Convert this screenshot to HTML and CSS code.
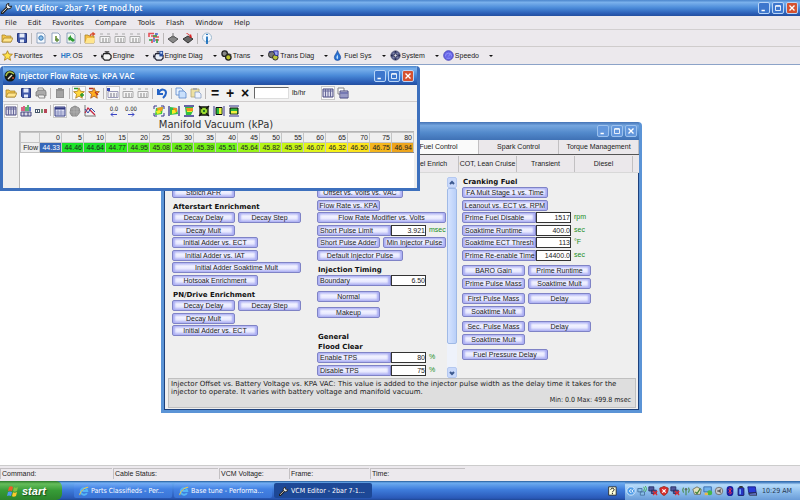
FILE: index.html
```html
<!DOCTYPE html>
<html lang="en">
<head>
<meta charset="utf-8">
<title>VCM Editor - 2bar 7-1 PE mod.hpt</title>
<link rel="stylesheet" href="styles.css">
</head>
<body>
<svg class="defs" aria-hidden="true">
  <symbol id="wrench" viewBox="0 0 12 12"><path d="M1 11 6.500 5.500" stroke="#222" stroke-width="3" stroke-linecap="round"/><path d="M1.300 10.500 7 5" stroke="#ddd" stroke-width="1"/><path d="M10.500 4A2.700 2.700 0 1 1 8 1.500L7.500 3.500 9 4.500Z" fill="#eee" stroke="#222"/></symbol>
  <symbol id="folder" viewBox="0 0 12 12"><path d="M1 10V3h3l1 1h5v6Z" fill="#f5c64a" stroke="#a8852c" stroke-width=".8"/><path d="M1 10 3 6h9l-2 4Z" fill="#ffe58d" stroke="#a8852c" stroke-width=".8"/></symbol>
  <symbol id="save" viewBox="0 0 12 12"><path d="M1.500 1.500h9v9h-8l-1-1Z" fill="#4058a8" stroke="#27397e"/><path d="M3.500 1.500h5v4h-5ZM4 7.500h4v3H4Z" fill="#e5ebfa"/></symbol>
  <symbol id="page" viewBox="0 0 12 12"><path d="M2 1h6l2 2v8H2Z" fill="#f5faff" stroke="#7891b0" stroke-width=".8"/><circle cx="6" cy="6" r="2.200" fill="#8fc0e8" stroke="#3977b2"/></symbol>
  <symbol id="pageadd" viewBox="0 0 12 12"><path d="M2 1h6l2 2v8H2Z" fill="#fff" stroke="#7891b0" stroke-width=".8"/><path d="M5 4h2v4H5Z" fill="#89a45b"/><path d="M5 8h4M7 6v4" stroke="#5f8a3c" stroke-width="1.300"/></symbol>
  <symbol id="pagego" viewBox="0 0 12 12"><path d="M2 1h6l2 2v8H2Z" fill="#f0f8f0" stroke="#7891b0" stroke-width=".8"/><path d="M3 6 6 3v2l4 3-2 2-3-2-1 1Z" fill="#2f9b34"/></symbol>
  <symbol id="foldernew" viewBox="0 0 12 12"><path d="M1 11V3h3l1 1h5v7Z" fill="#f5bd41" stroke="#a8852c" stroke-width=".8"/><path d="M1 11 3 6h8l-1 5Z" fill="#ffe58d"/><path d="M6 4q1-3 4-2M8.500.5l2 1.500-2 1.500" fill="none" stroke="#d94a2c" stroke-width="1.300"/></symbol>
  <symbol id="grid" viewBox="0 0 12 12"><path d="M1 4.500h10v6H1Z" fill="#f5f5f5" stroke="#aaa"/><path d="M3 7h2M6 7h2M9 7h1M3 9h2M6 9h2M9 9h1" stroke="#888"/><path d="M1 2h3M8 2h3" stroke="#aaa"/></symbol>
  <symbol id="griddot" viewBox="0 0 12 12"><path d="M1 4.500h10v6H1Z" fill="#f5f5f5" stroke="#9a9ab8"/><path d="M3 7h2M6 7h2M9 7h1M3 9h2M6 9h2M9 9h1" stroke="#778"/><path d="M0 1h3v3H0Z" fill="#3548b2"/></symbol>
  <symbol id="flow" viewBox="0 0 12 12"><path d="M1 5V1.500h5M8 1v4h3M4 7v4M7 8h4M3 4h3v3" fill="none" stroke="#e44f57" stroke-width="1.600"/><path d="M5 4h4M1 8h3M9 7v4" stroke="#35a547" stroke-width="1.600"/><path d="M7 2h3M6 6v4" stroke="#487ce0" stroke-width="1.600"/></symbol>
  <symbol id="chip" viewBox="0 0 12 12"><path d="M1 7 6 4l5 3-5 4Z" fill="#888" stroke="#555"/><path d="M6 1v5M4 4l2 2 2-2" fill="none" stroke="#777"/></symbol>
  <symbol id="chipred" viewBox="0 0 12 12"><path d="M1 7 6 4l5 3-5 4Z" fill="#666" stroke="#333"/><path d="m4 1 4 3-1 1 3 1-1-4-1 1-3-2Z" fill="#dc2424"/></symbol>
  <symbol id="info" viewBox="0 0 12 12"><circle cx="6" cy="5.500" r="4.500" fill="#f2f8ff" stroke="#9fb8cc"/><path d="M6 2v1M6 4.500V9M5 9h2M6 9v3" stroke="#2273bd" stroke-width="1.800"/></symbol>
  <symbol id="star" viewBox="0 0 12 12"><path d="m6 .8 1.500 3.500 3.900.4-3 2.600.9 3.900L6 9.100l-3.300 2.100.9-3.900-3-2.600 3.900-.4Z" fill="#ffe34c" stroke="#a97b1a" stroke-width=".9"/></symbol>
  <symbol id="staradd" viewBox="0 0 12 12"><path d="m6 .8 1.500 3.500 3.900.4-3 2.600.9 3.900L6 9.100l-3.300 2.100.9-3.900-3-2.600 3.900-.4Z" fill="#ffd83d" stroke="#b07b1a" stroke-width=".8"/><path d="M1 1.500h4M9 6v4M7 8h4" fill="none" stroke="#2d9b2d" stroke-width="1.400"/></symbol>
  <symbol id="stardel" viewBox="0 0 12 12"><path d="m6 .8 1.500 3.500 3.900.4-3 2.600.9 3.900L6 9.100l-3.300 2.100.9-3.900-3-2.600 3.900-.4Z" fill="#ffad20" stroke="#a9571a" stroke-width=".8"/><path d="M1 1.500h4M7 5l3 3" fill="none" stroke="#b92f1f" stroke-width="1.400"/></symbol>
  <symbol id="engine" viewBox="0 0 12 12"><path d="M3 4h6l2 2v3l-2 2H4L2 9V6ZM0 5v4M0 7h2M4 2h5M6.500 2v2" fill="#f4f4f4" stroke="#222" stroke-width="1.300"/></symbol>
  <symbol id="enginediag" viewBox="0 0 12 12"><path d="M3 4h6l2 2v3l-2 2H4L2 9V6ZM0 5v4M0 7h2M4 2h3" fill="#e9eef8" stroke="#223" stroke-width="1.300"/><path d="M7 1h4v6H7Z" fill="#274c9c"/><path d="M8 2h2v2H8Z" fill="#c7dcff"/></symbol>
  <symbol id="trans" viewBox="0 0 12 12"><circle cx="4" cy="4" r="3" fill="#888" stroke="#222" stroke-width="1.400"/><circle cx="8" cy="8" r="3" fill="#c0c62b" stroke="#222" stroke-width="1.400"/><path d="m5 2 3 2 3 1-1 2" fill="none" stroke="#333"/></symbol>
  <symbol id="transdiag" viewBox="0 0 12 12"><circle cx="4" cy="5" r="3.500" fill="#777" stroke="#222"/><circle cx="8" cy="8" r="3" fill="#bac33b" stroke="#222"/><path d="M1 2h3M6 1h5v5H8Z" fill="#98a5ef" stroke="#272c9a"/></symbol>
  <symbol id="drop" viewBox="0 0 12 12"><path d="M6 .5C7 4 9.500 5.500 9.500 8A3.500 3.500 0 0 1 2.500 8C2.500 5.500 5 4 6 .5Z" fill="#286fd1" stroke="#164292" stroke-width=".6"/><path d="M6 5c1 3 1 4 0 5-2-1-1-3 0-5Z" fill="#bde1ff"/></symbol>
  <symbol id="system" viewBox="0 0 12 12"><circle cx="6" cy="6" r="5" fill="#adb1cb" stroke="#44476b"/><path d="M6 1v10M1 6h10" stroke="#20244d" stroke-width="2"/><path d="M3 3h6v6H3Z" fill="none" stroke="#3d4577"/><path d="M6 4v4M4 6h4" stroke="#fff" stroke-width=".7"/></symbol>
  <symbol id="speedo" viewBox="0 0 12 12"><circle cx="6" cy="6" r="5.200" fill="#6968e8" stroke="#433eb8"/><path d="M2.500 7a3.500 3.500 0 0 1 7 0M6 7 8 4M4 9h4" fill="none" stroke="#9b99ff" stroke-width=".8"/></symbol>
  <symbol id="printer" viewBox="0 0 12 12"><path d="M3 4V1h5l1 3" fill="#fff" stroke="#888"/><path d="m1 5 3-2h6l1 2v4H1Z" fill="#aaa" stroke="#777" stroke-width=".8"/><path d="M3 8h6l1 3H4Z" fill="#eee" stroke="#777" stroke-width=".8"/></symbol>
  <symbol id="greydoc" viewBox="0 0 12 12"><path d="M2 2h2V1h4v1h2v9H2Z" fill="#909090"/><path d="M3 5h6M3 7h6M3 9h6" stroke="#b5b5b5"/></symbol>
  <symbol id="undo" viewBox="0 0 12 12"><path d="M2 2v5h5M2.500 6C5 1 10 2 10 6c0 2-1 3-3 5" fill="none" stroke="#2564c7" stroke-width="2"/></symbol>
  <symbol id="copy" viewBox="0 0 12 12"><path d="M1 1h5l2 2v5H1Z" fill="#e7f2ff" stroke="#5887ca" stroke-width=".8"/><path d="M4 4h5l2 2v5H4Z" fill="#c9e0fc" stroke="#5887ca" stroke-width=".8"/></symbol>
  <symbol id="paste" viewBox="0 0 12 12"><path d="M1 2h8v8H1Z" fill="#eee1a2" stroke="#b1a67b" stroke-width=".8"/><path d="M3 1h4v2H3Z" fill="#aaa"/><path d="M5 5h4l2 2v4H5Z" fill="#eef3ff" stroke="#899ec1" stroke-width=".8"/></symbol>
  <symbol id="columns" viewBox="0 0 12 12"><path d="M1 2h10v8H1Z" fill="#dcdcec" stroke="#44457c"/><path d="M3.500 2v8M6 2v8M8.500 2v8M1 4h10" stroke="#66689a"/></symbol>
  <symbol id="columns2" viewBox="0 0 12 12"><path d="M1 1h6v6H1Z" fill="#fff" stroke="#888"/><path d="M3 4h8v7H3Z" fill="#dcdcec" stroke="#44457c"/><path d="M5 5v6M7 5v6M9 5v6M3 6h8" stroke="#5558a0"/></symbol>
  <symbol id="bars" viewBox="0 0 12 12"><path d="M2 2v4M4 1v5" stroke="#d43d67" stroke-width="1.600"/><path d="M6 2v4M8 0v6" stroke="#36a852" stroke-width="1.600"/><path d="M10 2v4" stroke="#4156c7" stroke-width="1.600"/><path d="M1 7h10v4H1Z" fill="#d8d8e8" stroke="#44457c"/><path d="M4 7v4M8 7v4" stroke="#44457c"/></symbol>
  <symbol id="pair" viewBox="0 0 12 12"><path d="M0 4h5v4H0Z" fill="#47586c"/><path d="M1 5h1v2H1M3 5h1v2H3" fill="#fff"/><path d="M6 4h2v4H6Z" fill="#6f9b70"/><path d="M9 4h3v4H9Z" fill="#b64657"/></symbol>
  <symbol id="tableview" viewBox="0 0 12 12"><path d="M1 2h10v9H1Z" fill="#dfe1f5" stroke="#303981"/><path d="M1 3.500h10" stroke="#303981" stroke-width="2"/><path d="M4 4v7M7 4v7M1 7h10M1 9h10" stroke="#7a81b5" stroke-width=".7"/></symbol>
  <symbol id="sphere" viewBox="0 0 12 12"><path d="m2 3 4-2 4 2 1 4-3 4H3L1 8Z" fill="#999" stroke="#888"/><path d="M2 4h8M1 7h10M5 2v9M8 2v9" stroke="#b8b8b8" stroke-width=".6"/></symbol>
  <symbol id="chart" viewBox="0 0 12 12"><path d="M1 0v11h11" fill="none" stroke="#777"/><path d="m1 8 3-5 3 3 4 4" fill="none" stroke="#c4253f" stroke-width="1.200"/><path d="m1 4 3 4 3-5 4 4" fill="none" stroke="#334da8"/></symbol>
  <symbol id="heat" viewBox="0 0 12 12"><path d="M1 4V1h3M8 1h3v3M11 8v3H8M4 11H1V8" fill="none" stroke="#34358b"/><path d="M3 3 10 2 9 9 2 10Z" fill="#3dc83b"/><path d="m4 3 6-1-1 4-4 1Z" fill="#f49a1e"/><path d="m3 6 4-1 1 3-4 1Z" fill="#f4ee27"/></symbol>
  <symbol id="heatv" viewBox="0 0 12 12"><path d="M1 1v10M11 1v10" stroke="#34358b" stroke-width="1.300"/><path d="M2 2 9 3l1 6-8 1Z" fill="#33bf43"/><path d="m5 3 4 0v4L6 8Z" fill="#f48e1e"/><path d="m4 5 3 0 1 3-4 1Z" fill="#f4ee27"/></symbol>
  <symbol id="heath" viewBox="0 0 12 12"><path d="M1 1h10M1 11h10" stroke="#34358b" stroke-width="1.300"/><path d="M2 2h8v4l-2 4H3Z" fill="#33bf43"/><path d="M3 3h7v3H4Z" fill="#f48e1e"/><path d="M4 6h5v1H4Z" fill="#f4ee27"/></symbol>
  <symbol id="boxx" viewBox="0 0 12 12"><path d="M2 2h8v8H2Z" fill="#9bdc31" stroke="#111" stroke-width="1.300"/><path d="m1 1 3 3M11 1 8 4M1 11l3-3M11 11 8 8" stroke="#111" stroke-width="1.300"/><path d="M5 5h2v2H5Z" fill="#1f7821"/></symbol>
  <symbol id="boxv" viewBox="0 0 12 12"><path d="M1 1v10M11 1v10" stroke="#34358b"/><path d="M3 2.500h6v7H3Z" fill="#2bb63d" stroke="#111"/><path d="M6 3h2.500v6H6Z" fill="#f4ef3c"/></symbol>
  <symbol id="boxh" viewBox="0 0 12 12"><path d="M1 1h10M1 11h10" stroke="#34358b"/><path d="M2 3h8v6H2Z" fill="#2bb63d" stroke="#111"/><path d="M3 6h6v2.500H3Z" fill="#f4ef3c"/></symbol>
  <symbol id="left" viewBox="0 0 12 5"><path d="M3 2.500h6M5 .5 3 2.500l2 2" fill="none" stroke="#3b46c4"/></symbol>
  <symbol id="right" viewBox="0 0 12 5"><path d="M3 2.500h6M7 .5l2 2-2 2" fill="none" stroke="#3b46c4"/></symbol>
  <symbol id="gauge" viewBox="0 0 12 12"><circle cx="6" cy="6" r="5.500" fill="#171b14"/><path d="M2 6c1-5 5-5 8-2" stroke="#a9c14a" stroke-width="1.500" fill="none"/><path d="m4 9 4-4" stroke="#e8e4cf" stroke-width="1.500"/><path d="M8 8h2" stroke="#d54b35" stroke-width="1.500"/></symbol>
  <symbol id="min" viewBox="0 0 12 12"><path d="M3 9h4" stroke="#fff" stroke-width="1.800"/></symbol>
  <symbol id="max" viewBox="0 0 12 12"><path d="M3 3.500h6v5.500H3Z" fill="none" stroke="#fff"/><path d="M3 3.500h6" stroke="#fff" stroke-width="1.600"/></symbol>
  <symbol id="close" viewBox="0 0 12 12"><path d="m3 3 6 6M9 3 3 9" stroke="#fff" stroke-width="1.600"/></symbol>
  <symbol id="ie" viewBox="0 0 12 12"><path d="M9.500 8.500A4 4 0 1 1 10 6H4" fill="none" stroke="#55b6f5" stroke-width="2.200"/><path d="M1 11C0 8 7 1 11 1.500" fill="none" stroke="#f5cd45" stroke-width="1.200"/></symbol>
  <symbol id="windows" viewBox="0 0 12 12"><path d="M2 2q2-1.500 4 0L5 6Q3 5 1 6Z" fill="#f05b28"/><path d="M7 2.300q2 1 4-.3l-1 4q-2 1.200-4 .3Z" fill="#80c342"/><path d="M1 7q2-1.200 4 0l-1 4q-2-1.200-4 0Z" fill="#4e9af0"/><path d="M6 7.300q2 1 4-.3l-1 4q-2 1.200-4 .3Z" fill="#fbc92c"/></symbol>
  <symbol id="help" viewBox="0 0 12 12"><path d="M2 1h9v10H2Z" fill="#ffffdc" stroke="#222"/><path d="M4.500 4.500C4.500 2 8.500 2 8.500 4.500 8.500 6 6.500 6 6.500 7.500M6.500 8.500v1.300" fill="none" stroke="#111" stroke-width="1.200"/></symbol>
  <symbol id="collapse" viewBox="0 0 12 12"><circle cx="6" cy="6" r="5" fill="#4c9be8" stroke="#e5f2ff"/><path d="M6.500 3.500 4 6l2.500 2.500M9 4 7 6l2 2" fill="none" stroke="#fff" stroke-width="1.200"/></symbol>
  <symbol id="net" viewBox="0 0 12 12"><path d="M1 3h5v4H1ZM4 7h5v4H4Z" fill="#87bfe9" stroke="#456d9b"/><path d="M8 1q2 2 0 5M10 0q3 3 0 7" fill="none" stroke="#3aad43"/></symbol>
  <symbol id="netoff" viewBox="0 0 12 12"><path d="M1 1h6v5H1ZM4 5h6v4H4Z" fill="#50589c" stroke="#252e61"/><path d="m6 6 5 5M11 6l-5 5" stroke="#e32a2a" stroke-width="1.500"/></symbol>
  <symbol id="shield" viewBox="0 0 12 12"><path d="m6 .5 5 2c0 5-1 7-5 9-4-2-5-4-5-9Z" fill="#d92d2d" stroke="#932"/><path d="m4 4 4 4M8 4 4 8" stroke="#fff" stroke-width="1.500"/></symbol>
  <symbol id="antenna" viewBox="0 0 12 12"><path d="M6 4v7M3 2q-2 3 0 6M9 2q2 3 0 6" fill="none" stroke="#4a8a4c" stroke-width="1.300"/><circle cx="6" cy="4" r="1.500" fill="#5c7160"/></symbol>
  <symbol id="check" viewBox="0 0 12 12"><path d="m1 4 5-3 5 3-1 6H3Z" fill="#e3e0bc" stroke="#66695a"/><path d="m4 7 2 2 4-6" fill="none" stroke="#3a7f2e" stroke-width="1.500"/></symbol>
  <symbol id="monitor" viewBox="0 0 12 12"><path d="M1 1h9v6H1Z" fill="#71b1ea" stroke="#36a"/><circle cx="8" cy="8" r="3" fill="#45b64a"/><path d="M2 8h4v3H2Z" fill="#e9b84e"/></symbol>
  <symbol id="speaker" viewBox="0 0 12 12"><circle cx="6" cy="6" r="4.500" fill="#c8c8c8" stroke="#666"/><path d="M4 5h2l2-2v6L6 7H4Z" fill="#555"/></symbol>
  <symbol id="bt" viewBox="0 0 12 12"><rect x="2" y="0" width="8" height="12" rx="4" fill="#171d9f"/><path d="m4 4 4 4-2 2V2l2 2-4 4" fill="none" stroke="#ec3158"/></symbol>
  <symbol id="battery" viewBox="0 0 12 12"><rect x="2.500" y="2" width="7" height="9.500" rx="1" fill="#2735c4" stroke="#111659"/><path d="M4 1h4" stroke="#333" stroke-width="2"/><path d="M4 4h2v6H4Z" fill="#70aaf5"/></symbol>
  <symbol id="laptop" viewBox="0 0 12 12"><path d="M1 1h9l1 7H2Z" fill="#2a3bd6" stroke="#171e7c"/><path d="m2 9 9-1 1 3H3Z" fill="#7088e8" stroke="#223"/></symbol>
</svg>

<header class="app-title">
  <svg class="ico"><use href="#wrench"/></svg><h1>VCM Editor - 2bar 7-1 PE mod.hpt</h1>
  <div class="caption"><button aria-label="Minimize"><svg><use href="#min"/></svg></button><button aria-label="Restore"><svg><use href="#max"/></svg></button><button class="x" aria-label="Close"><svg><use href="#close"/></svg></button></div>
</header>
<nav class="menu"><button>File</button><button>Edit</button><button>Favorites</button><button>Compare</button><button>Tools</button><button>Flash</button><button>Window</button><button>Help</button></nav>
<div class="toolbar">
  <button aria-label="Open"><svg><use href="#folder"/></svg></button><button aria-label="Save"><svg><use href="#save"/></svg></button><i></i>
  <button aria-label="View"><svg><use href="#page"/></svg></button><button aria-label="Add"><svg><use href="#pageadd"/></svg></button><button aria-label="Export"><svg><use href="#pagego"/></svg></button><i></i>
  <button aria-label="Open compare"><svg><use href="#foldernew"/></svg></button><button aria-label="Grid A"><svg><use href="#grid"/></svg></button><button aria-label="Grid B"><svg><use href="#grid"/></svg></button><button aria-label="Grid C"><svg><use href="#grid"/></svg></button><i></i>
  <button aria-label="Differences"><svg><use href="#flow"/></svg></button><i></i>
  <button aria-label="Read"><svg><use href="#chip"/></svg></button><button aria-label="Write"><svg><use href="#chipred"/></svg></button><i></i>
  <button aria-label="Information"><svg><use href="#info"/></svg></button>
</div>
<div class="groups">
  <button><svg><use href="#star"/></svg>Favorites<b></b></button>
  <button><em>HP.</em>OS<b></b></button>
  <button><svg><use href="#engine"/></svg>Engine<b></b></button>
  <button><svg><use href="#enginediag"/></svg>Engine Diag<b></b></button>
  <button><svg><use href="#trans"/></svg>Trans<b></b></button>
  <button><svg><use href="#transdiag"/></svg>Trans Diag<b></b></button>
  <button><svg><use href="#drop"/></svg>Fuel Sys<b></b></button>
  <button><svg><use href="#system"/></svg>System<b></b></button>
  <button><svg><use href="#speedo"/></svg>Speedo<b></b></button>
</div>

<main class="desk">
  <section class="win editor">
    <div class="win-title"><div class="caption"><button aria-label="Minimize"><svg><use href="#min"/></svg></button><button aria-label="Maximize"><svg><use href="#max"/></svg></button><button aria-label="Close"><svg><use href="#close"/></svg></button></div></div>
    <div class="tabs main-tabs"><button class="on">Fuel Control</button><button>Spark Control</button><button>Torque Management</button></div>
    <div class="tabs sub-tabs"><button>Fuel Enrich</button><button>COT, Lean Cruise</button><button>Transient</button><button>Diesel</button><span></span></div>
    <div class="panel">
      <div class="col first">
        <div class="rows"><button class="half">Stoich AFR</button></div>
        <h2>Afterstart Enrichment</h2>
        <div class="rows">
          <div class="row"><button class="half">Decay Delay</button><button class="half">Decay Step</button></div>
          <button class="half">Decay Mult</button>
          <button class="mid">Initial Adder vs. ECT</button>
          <button class="mid">Initial Adder vs. IAT</button>
          <button>Initial Adder Soaktime Mult</button>
          <button class="mid">Hotsoak Enrichment</button>
        </div>
        <h2>PN/Drive Enrichment</h2>
        <div class="rows">
          <div class="row"><button class="half">Decay Delay</button><button class="half">Decay Step</button></div>
          <button class="half">Decay Mult</button>
          <button class="mid">Initial Adder vs. ECT</button>
        </div>
      </div>
      <div class="col second">
        <div class="rows">
          <button class="mid">Offset vs. Volts vs. VAC</button>
          <button class="half">Flow Rate vs. KPA</button>
          <button>Flow Rate Modifier vs. Volts</button>
          <div class="field"><label for="spl">Short Pulse Limit</label><input id="spl" value="3.921"><span>msec</span></div>
          <div class="row"><button class="half">Short Pulse Adder</button><button class="half">Min Injector Pulse</button></div>
          <button class="mid">Default Injector Pulse</button>
        </div>
        <h2>Injection Timing</h2>
        <div class="rows spaced">
          <div class="field"><label for="bnd">Boundary</label><input id="bnd" value="6.50"></div>
          <button class="half">Normal</button>
          <button class="half">Makeup</button>
        </div>
        <h2 class="general">General<br>Flood Clear</h2>
        <div class="rows">
          <div class="field"><label for="etps">Enable TPS</label><input id="etps" value="80"><span>%</span></div>
          <div class="field"><label for="dtps">Disable TPS</label><input id="dtps" value="75"><span>%</span></div>
        </div>
      </div>
      <div class="scroll"><button aria-label="Scroll up"><svg viewBox="0 0 8 8"><path d="m2 5 2-2 2 2"/></svg></button><div class="thumb"></div><button aria-label="Scroll down"><svg viewBox="0 0 8 8"><path d="m2 3 2 2 2-2"/></svg></button></div>
      <div class="col third">
        <h2>Cranking Fuel</h2>
        <div class="rows">
          <button class="mid">FA Mult Stage 1 vs. Time</button>
          <button class="mid">Leanout vs. ECT vs. RPM</button>
          <div class="field"><label for="pfd">Prime Fuel Disable</label><input id="pfd" value="1517"><span>rpm</span></div>
          <div class="field"><label for="skr">Soaktime Runtime</label><input id="skr" value="400.0"><span>sec</span></div>
          <div class="field"><label for="ske">Soaktime ECT Thresh</label><input id="ske" value="113"><span>°F</span></div>
          <div class="field"><label for="prt">Prime Re-enable Time</label><input id="prt" value="14400.0"><span>sec</span></div>
        </div>
        <div class="rows block">
          <div class="row"><button class="half">BARO Gain</button><button class="half">Prime Runtime</button></div>
          <div class="row"><button class="half">Prime Pulse Mass</button><button class="half">Soaktime Mult</button></div>
        </div>
        <div class="rows block">
          <div class="row"><button class="half">First Pulse Mass</button><button class="half">Delay</button></div>
          <button class="half">Soaktime Mult</button>
        </div>
        <div class="rows block">
          <div class="row"><button class="half">Sec. Pulse Mass</button><button class="half">Delay</button></div>
          <button class="half">Soaktime Mult</button>
        </div>
        <div class="rows block"><button class="mid">Fuel Pressure Delay</button></div>
      </div>
    </div>
    <div class="note"><p>Injector Offset vs. Battery Voltage vs. KPA VAC: This value is added to the injector pulse width as the delay time it takes for the injector to operate. It varies with battery voltage and manifold vacuum.</p><p class="range">Min: 0.0 Max: 499.8 msec</p></div>
  </section>

  <section class="win flow">
    <div class="win-title"><svg class="ico"><use href="#gauge"/></svg><h1>Injector Flow Rate vs. KPA VAC</h1><div class="caption"><button aria-label="Minimize"><svg><use href="#min"/></svg></button><button aria-label="Maximize"><svg><use href="#max"/></svg></button><button class="x" aria-label="Close"><svg><use href="#close"/></svg></button></div></div>
    <div class="toolbar">
      <button aria-label="Open"><svg><use href="#folder"/></svg></button><button aria-label="Save"><svg><use href="#save"/></svg></button><button aria-label="Print"><svg><use href="#printer"/></svg></button><i></i>
      <button aria-label="Notes"><svg><use href="#greydoc"/></svg></button><i></i>
      <button class="on" aria-label="Add favorite"><svg><use href="#staradd"/></svg></button><button aria-label="Remove favorite"><svg><use href="#stardel"/></svg></button><i></i>
      <button class="on" aria-label="Current"><svg><use href="#griddot"/></svg></button><button aria-label="Compare"><svg><use href="#grid"/></svg></button><button aria-label="Difference"><svg><use href="#grid"/></svg></button><i></i>
      <button aria-label="Undo"><svg><use href="#undo"/></svg></button><i></i>
      <button aria-label="Copy"><svg><use href="#copy"/></svg></button><button aria-label="Paste"><svg><use href="#paste"/></svg></button><i></i>
      <button class="op">=</button><button class="op">+</button><button class="op">×</button>
      <input class="amount" id="amount"><label for="amount">lb/hr</label>
      <button class="on" aria-label="Show columns"><svg><use href="#columns"/></svg></button><button aria-label="Copy columns"><svg><use href="#columns2"/></svg></button>
    </div>
    <div class="toolbar second-bar">
      <button class="on" aria-label="Columns"><svg><use href="#columns"/></svg></button><button aria-label="Bars"><svg><use href="#bars"/></svg></button><button aria-label="Pairs"><svg><use href="#pair"/></svg></button><i></i>
      <button class="on" aria-label="Table"><svg><use href="#tableview"/></svg></button><button aria-label="Surface"><svg><use href="#sphere"/></svg></button><button aria-label="Chart"><svg><use href="#chart"/></svg></button>
      <div class="decimals"><button>0.0<svg><use href="#left"/></svg></button><button>0.00<svg><use href="#right"/></svg></button></div>
      <button aria-label="Smooth"><svg><use href="#heat"/></svg></button><button aria-label="Smooth rows"><svg><use href="#heatv"/></svg></button><button aria-label="Smooth columns"><svg><use href="#heath"/></svg></button><button aria-label="Interpolate"><svg><use href="#boxx"/></svg></button><button aria-label="Interpolate rows"><svg><use href="#boxv"/></svg></button><button aria-label="Interpolate columns"><svg><use href="#boxh"/></svg></button>
    </div>
    <h2 class="axis">Manifold Vacuum (kPa)</h2>
    <div class="sheet">
      <table>
        <thead><tr><th class="corner"></th><th>0</th><th>5</th><th>10</th><th>15</th><th>20</th><th>25</th><th>30</th><th>35</th><th>40</th><th>45</th><th>50</th><th>55</th><th>60</th><th>65</th><th>70</th><th>75</th><th>80</th></tr></thead>
        <tbody><tr><th>Flow</th><td class="sel">44.33</td><td class="h1">44.46</td><td class="h1">44.64</td><td class="h2">44.77</td><td class="h3">44.95</td><td class="h4">45.08</td><td class="h4">45.20</td><td class="h5">45.39</td><td class="h6">45.51</td><td class="h7">45.64</td><td class="h8">45.82</td><td class="h9">45.95</td><td class="h10">46.07</td><td class="h11">46.32</td><td class="h12">46.50</td><td class="h13">46.75</td><td class="h14">46.94</td></tr></tbody>
      </table>
    </div>
  </section>
</main>

<footer class="status"><span class="s1">Command:</span><span class="s2">Cable Status:</span><span class="s3">VCM Voltage:</span><span class="s4">Frame:</span><span class="s5">Time:</span></footer>
<div class="taskbar">
  <button class="start"><svg><use href="#windows"/></svg>start</button>
  <div class="tasks">
    <button><svg><use href="#ie"/></svg>Parts Classifieds - Per...</button>
    <button><svg><use href="#ie"/></svg>Base tune - Performa...</button>
    <button class="on"><svg><use href="#wrench"/></svg>VCM Editor - 2bar 7-1...</button>
  </div>
  <svg class="help"><use href="#help"/></svg>
  <div class="tray"><svg><use href="#collapse"/></svg><svg><use href="#net"/></svg><svg><use href="#netoff"/></svg><svg><use href="#shield"/></svg><svg><use href="#netoff"/></svg><svg><use href="#antenna"/></svg><svg><use href="#check"/></svg><svg><use href="#monitor"/></svg><svg><use href="#speaker"/></svg><svg><use href="#bt"/></svg><svg><use href="#battery"/></svg><svg><use href="#laptop"/></svg><time>10:29 AM</time></div>
</div>
</body>
</html>
```
FILE: styles.css
```css
* { box-sizing: border-box; }
body {
  margin: 0;
  min-height: 100vh;
  display: flex;
  flex-direction: column;
  overflow: hidden;
  background: #ece9ed;
  color: #222;
  font: 7px/10px "Liberation Sans", sans-serif;
}
button, input { font: inherit; color: inherit; border: 0; padding: 0; margin: 0; background: none; }
button { white-space: nowrap; }
svg { display: block; flex: none; width: 12px; height: 12px; }
h1, h2, p { margin: 0; }
.defs { position: absolute; width: 0; height: 0; }

/* Title bars */
.app-title, .win-title {
  display: flex;
  align-items: center;
  gap: 2px;
  background: linear-gradient(#4b85cc, #7ab1ec 15%, #4a8ad8 50%, #2a5db5 85%, #244f9f);
  color: #fff;
}
.app-title { height: 16px; padding: 0 2px 0 1px; }
.app-title h1, .win-title h1 { font: 600 8px/12px "Open Sans", sans-serif; }
.caption { display: flex; gap: 2px; margin-left: auto; }
.caption button { width: 12px; height: 12px; border: 1px solid #b9d5f7; border-radius: 2px; background: #3d77cd; }
.caption svg { width: 10px; height: 10px; }
.caption .x { background: #d5512f; }

/* Menu and toolbars */
.menu { height: 14px; display: flex; gap: 11px; padding-left: 5px; border-bottom: 1px solid #d2cfd0; font: 7px/12px "DejaVu Sans", sans-serif; }
.toolbar { display: flex; align-items: center; gap: 3px; height: 17px; padding-left: 1px; border-bottom: 1px solid #cfcccc; }
.toolbar i { width: 1px; height: 11px; background: #bbb8b8; }
.groups { display: flex; align-items: center; gap: 4px; height: 17px; padding-left: 2px; }
.groups button { display: flex; align-items: center; gap: 1px; }
.groups svg { width: 11px; height: 11px; }
.groups b { margin-left: 9px; border: 2px solid transparent; border-top-color: #111; border-bottom: 0; }
.groups em { font: bold 7px/10px "Liberation Sans", sans-serif; color: #2777c5; }

/* MDI workspace */
.desk { position: relative; flex: 1; background: #fff; border-top: 1px solid #8ca3c8; }
.win { position: absolute; display: flex; flex-direction: column; background: #efefef; border-radius: 4px 4px 0 0; overflow: hidden; }
.win-title { height: 18px; flex: none; }
.flow { left: 0; top: 1px; width: 420px; height: 125px; border: solid #3d70bd; border-width: 0 3px 3px; }
.flow .win-title { margin: 0 -3px; padding: 0 6px 0 4px; height: 19px; }
.flow .toolbar { padding-left: 2px; background: #f2f2f2; }
.toolbar .on { background: #fafafa; outline: 1px solid #c8c8c8; }
.toolbar .op { width: 12px; font: bold 14px/12px "Liberation Sans", sans-serif; color: #111; }
.toolbar .amount { width: 35px; height: 12px; background: #fff; border: 1px solid #ccc; border-color: #666 #ddd #ddd #666; }
.toolbar label { margin-right: 13px; }
.decimals { display: flex; margin: 0 12px 0 8px; gap: 3px; }
.decimals button { width: 14px; font: 6px/7px "DejaVu Sans Condensed", sans-serif; }
.decimals svg { width: 12px; height: 5px; margin: auto; }
.flow .second-bar { border-bottom: 0; }
.axis { font: 10px/12px "DejaVu Sans", sans-serif; text-align: center; padding-left: 12px; color: #333; }
.sheet { flex: 1; margin: 0 3px 0 16px; background: #fff; border: solid #b5b5b5; border-width: 1px 0 0 1px; }
table { width: 100%; border-collapse: collapse; table-layout: fixed; }
th, td { height: 10px; padding: 0 1px 0 0; text-align: right; font-weight: normal; border: 1px solid #c5c5c5; line-height: 9px; }
th { background: #efefef; }
.corner { width: 19px; }
td { border-color: transparent #c5c5c5 #888 transparent; }
.sel { background: #3566b8; color: #fff; }
.h1 { background: #1de32a; } .h2 { background: #30ee1d; } .h3 { background: #4fee1d; }
.h4 { background: #67ee18; } .h5 { background: #73f016; } .h6 { background: #72f71d; }
.h7 { background: #9af518; } .h8 { background: #b2f514; } .h9 { background: #c5f616; }
.h10 { background: #e0f51c; } .h11 { background: #f6f218; } .h12 { background: #fbe31e; }
.h13 { background: #f4b61d; } .h14 { background: #eda51d; }

.editor { left: 161px; top: 57px; width: 481px; height: 291px; border: solid #5b94d6; border-width: 0 3px 3px; box-shadow: inset 0 0 0 1px #1d417c; }
.editor .win-title { margin: 0 -3px; padding-right: 5px; background: linear-gradient(#4473b6, #75a6df 20%, #5289cb 60%, #3f71b5); }
.editor .caption button { background: #6397dc; border-color: #9cc1ee; }
.tabs { display: flex; justify-content: flex-end; background: #ebe8eb; }
.tabs button { overflow: hidden; border-right: 1px solid #c2c0c2; }
.main-tabs { height: 14px; }
.main-tabs button { width: 80px; }
.main-tabs .on { background: #fafafa; }
.sub-tabs { height: 18px; border: solid #555; border-width: 1px 0 0; padding-top: 1px; }
.sub-tabs button { width: 58px; }
.sub-tabs span { width: 6px; }
.panel { flex: 1; min-height: 0; display: flex; overflow: hidden; padding-top: 4px; border-top: 1px solid #d8d8d8; }
.col { width: 129px; flex: none; }
.first { margin: 10px 16px 0 8px; }
.second { margin-top: 10px; }
.scroll { width: 10px; margin: 0 5px 0 1px; display: flex; flex-direction: column; background: #eef2fb; }
.scroll button { height: 11px; flex: none; border: 1px solid #b4c8f0; border-radius: 2px; background: #c9d9fb; }
.scroll svg { width: 8px; height: 8px; }
.scroll path { fill: none; stroke: #3d5a8f; stroke-width: 2; }
.thumb { flex: 1; margin-bottom: 23px; border: 1px solid #9fb9e6; border-radius: 2px; background: linear-gradient(90deg, #d5e3ff, #b9cff8); }
.col h2 { font: bold 7px/10px "DejaVu Sans", sans-serif; color: #111; padding-left: 1px; margin-top: 4px; }
.third h2 { margin-top: 0; }
.col .general { margin-top: 14px; }
.rows > * { margin-bottom: 2px; }
.rows > :nth-child(even) { margin-bottom: 1px; }
.rows.spaced > * { margin-bottom: 5px; }
.rows.block { padding-top: 3px; }
.rows > button { display: block; width: 129px; }
.row { display: flex; gap: 3px; }
.rows button, .field label {
  height: 11px;
  line-height: 9px;
  border: 1px solid #7f83c6;
  border-radius: 2px;
  background: linear-gradient(#b9bcf5, #f1f2ff 35%, #eaebff 60%, #b2b5f2);
  box-shadow: inset 2px 0 2px #acaff4, inset -2px 0 2px #acaff4;
}
.rows .half { width: 63px; }
.rows .mid { width: 86px; }
.field { display: flex; height: 11px; }
.field label { width: 74px; padding-left: 2px; white-space: nowrap; overflow: hidden; border-radius: 2px 0 0 2px; }
.field input { width: 35px; background: #fff; border: 1px solid #333; text-align: right; }
.field span { margin-left: 3px; color: #198c1e; }
.third h2 { margin-top: 0; }
.note { flex: none; height: 30px; margin: 0 3px 2px 4px; padding: 1px 2px; background: #dedede; border: 1px solid #c0c0c0; font: 7px/8px "DejaVu Sans", sans-serif; }
.range { text-align: right; font: 7px/9px "DejaVu Sans Condensed", sans-serif; padding-right: 2px; }

/* Status bar and taskbar */
.status { display: flex; gap: 1px; height: 16px; padding: 2px 0; border-top: 1px solid #ccc; }
.status span { height: 11px; padding-left: 1px; border: solid #c3c0c3; border-width: 1px 0 0 1px; }
.s1 { width: 112px; } .s2 { width: 105px; } .s3 { width: 69px; } .s4 { width: 80px; } .s5 { width: 95px; }
.taskbar { display: flex; align-items: center; height: 19px; color: #fff; background: linear-gradient(#235a96, #6cacf0 10%, #3f7ddc 45%, #2a59b8 90%, #1f4795); font: 7px/10px "DejaVu Sans Condensed", sans-serif; }
.start { display: flex; align-items: center; gap: 3px; height: 19px; width: 62px; padding-left: 7px; border-radius: 0 6px 6px 0; color: #fff; background: linear-gradient(#2b7a2b, #65bd5b 15%, #379c37 50%, #2c842c); font: italic bold 11px/14px "Liberation Sans", sans-serif; text-shadow: 1px 1px 1px #1c4f1c; }
.tasks { display: flex; gap: 2px; margin-left: 12px; }
.tasks button { display: flex; align-items: center; gap: 2px; width: 98px; height: 15px; padding-left: 5px; border-radius: 2px; background: linear-gradient(#74adf5, #4382e4 40%, #3a74d6); }
.tasks svg { width: 10px; height: 10px; }
.tasks .on { background: #1d4896; }
.help { width: 10px; height: 10px; margin: 0 8px 0 auto; }
.tray { display: flex; align-items: center; gap: 1px; height: 18px; padding: 0 8px 0 1px; background: linear-gradient(#3a76bd, #b7dcfb 15%, #8dbdec 55%, #6a9cd8); color: #26364f; }
.tray svg { width: 10px; height: 10px; }
.tray time { margin-left: 4px; }
```
